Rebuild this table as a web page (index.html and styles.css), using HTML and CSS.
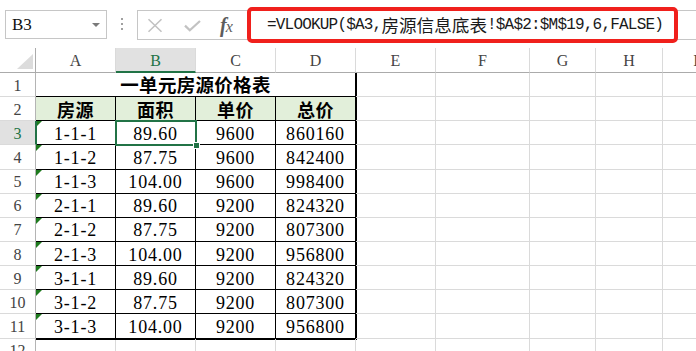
FILE: index.html
```html
<!DOCTYPE html>
<html lang="zh-CN">
<head>
<meta charset="utf-8">
<title>一单元房源价格表</title>
<link rel="stylesheet" href="styles.css">
</head>
<body>
<div class="app">
  <div class="fbar">
    <div class="namebox"><span class="nb-text">B3</span><span class="nb-arrow"></span></div>
    <div class="sep">
      <svg width="2" height="12" viewBox="0 0 2 12"><rect x="0" y="0" width="2" height="2" fill="#a0a0a0"/><rect x="0" y="5" width="2" height="2" fill="#a0a0a0"/><rect x="0" y="10" width="2" height="2" fill="#a0a0a0"/></svg>
    </div>
    <div class="finput">
      <div class="tools">
        <svg class="ic-x" width="16" height="15" viewBox="0 0 16 15"><path d="M1.5 1.2 L14.5 13.8 M14.5 1.2 L1.5 13.8" stroke="#c2c2c2" stroke-width="1.6" fill="none"/></svg>
        <svg class="ic-ok" width="17" height="12" viewBox="0 0 17 12"><path d="M1 5.6 L5.8 10.3 L16 1" stroke="#c2c2c2" stroke-width="2.2" fill="none"/></svg>
        <span class="fx">f<span class="fx-x">x</span></span>
      </div>
      <div class="formula"><span class="fm">=VLOOKUP($A3,</span><span class="fm-cjk">房源信息底表</span><span class="fm">!$A$2:$M$19,6,FALSE)</span></div>
    </div>
  </div>

  <div class="sheet">
    <div class="c corner"><span class="tri"></span></div>
    <div class="c ch">A</div><div class="c ch on">B</div><div class="c ch">C</div><div class="c ch">D</div><div class="c ch">E</div><div class="c ch">F</div><div class="c ch">G</div><div class="c ch">H</div><div class="c ch">I</div>

    <div class="c rh">1</div>
    <div class="c tb title last-col">一单元房源价格表</div>
    <div class="c"></div><div class="c"></div><div class="c"></div><div class="c"></div><div class="c"></div>

    <div class="c rh">2</div>
    <div class="c tb hd">房源</div><div class="c tb hd">面积</div><div class="c tb hd">单价</div><div class="c tb hd last-col">总价</div>
    <div class="c"></div><div class="c"></div><div class="c"></div><div class="c"></div><div class="c"></div>

    <div class="c rh on">3</div>
    <div class="c tb txt">1-1-1</div><div class="c tb sel">89.60</div><div class="c tb">9600</div><div class="c tb last-col">860160</div>
    <div class="c"></div><div class="c"></div><div class="c"></div><div class="c"></div><div class="c"></div>

    <div class="c rh">4</div>
    <div class="c tb txt">1-1-2</div><div class="c tb">87.75</div><div class="c tb">9600</div><div class="c tb last-col">842400</div>
    <div class="c"></div><div class="c"></div><div class="c"></div><div class="c"></div><div class="c"></div>

    <div class="c rh">5</div>
    <div class="c tb txt">1-1-3</div><div class="c tb">104.00</div><div class="c tb">9600</div><div class="c tb last-col">998400</div>
    <div class="c"></div><div class="c"></div><div class="c"></div><div class="c"></div><div class="c"></div>

    <div class="c rh">6</div>
    <div class="c tb txt">2-1-1</div><div class="c tb">89.60</div><div class="c tb">9200</div><div class="c tb last-col">824320</div>
    <div class="c"></div><div class="c"></div><div class="c"></div><div class="c"></div><div class="c"></div>

    <div class="c rh">7</div>
    <div class="c tb txt">2-1-2</div><div class="c tb">87.75</div><div class="c tb">9200</div><div class="c tb last-col">807300</div>
    <div class="c"></div><div class="c"></div><div class="c"></div><div class="c"></div><div class="c"></div>

    <div class="c rh">8</div>
    <div class="c tb txt">2-1-3</div><div class="c tb">104.00</div><div class="c tb">9200</div><div class="c tb last-col">956800</div>
    <div class="c"></div><div class="c"></div><div class="c"></div><div class="c"></div><div class="c"></div>

    <div class="c rh">9</div>
    <div class="c tb txt">3-1-1</div><div class="c tb">89.60</div><div class="c tb">9200</div><div class="c tb last-col">824320</div>
    <div class="c"></div><div class="c"></div><div class="c"></div><div class="c"></div><div class="c"></div>

    <div class="c rh">10</div>
    <div class="c tb txt">3-1-2</div><div class="c tb">87.75</div><div class="c tb">9200</div><div class="c tb last-col">807300</div>
    <div class="c"></div><div class="c"></div><div class="c"></div><div class="c"></div><div class="c"></div>

    <div class="c rh">11</div>
    <div class="c tb txt last-row">3-1-3</div><div class="c tb last-row">104.00</div><div class="c tb last-row">9200</div><div class="c tb last-col last-row">956800</div>
    <div class="c"></div><div class="c"></div><div class="c"></div><div class="c"></div><div class="c"></div>

    <div class="c rh">12</div>
    <div class="c"></div><div class="c"></div><div class="c"></div><div class="c"></div>
    <div class="c"></div><div class="c"></div><div class="c"></div><div class="c"></div><div class="c"></div>
  </div>
</div>
</body>
</html>
```

FILE: styles.css
```css
html, body {
  margin: 0;
  padding: 0;
  background: #fff;
}
body {
  width: 696px;
  height: 351px;
  overflow: hidden;
  font-family: "Liberation Serif", "Noto Sans CJK SC", serif;
  color: #000;
}
.app {
  width: 696px;
  height: 351px;
  overflow: hidden;
}

/* ---------- formula bar ---------- */
.fbar {
  display: flex;
  align-items: flex-start;
  height: 48px;
}
.namebox {
  box-sizing: border-box;
  flex: 0 0 102px;
  height: 29px;
  margin: 10px 0 0 5px;
  border: 1px solid #c6c6c6;
  display: flex;
  align-items: center;
  justify-content: space-between;
  padding: 0 6px 0 6px;
  font-size: 17px;
  color: #111;
}
.nb-arrow {
  width: 0;
  height: 0;
  border-left: 4px solid transparent;
  border-right: 4px solid transparent;
  border-top: 4px solid #7a7a7a;
}
.sep {
  flex: 0 0 30px;
  height: 48px;
  display: flex;
  align-items: center;
  justify-content: center;
}
.finput {
  flex: 1;
  box-sizing: border-box;
  height: 30px;
  margin-top: 10px;
  border: 1px solid #c6c6c6;
  border-right: 0;
  display: flex;
  align-items: center;
}
.tools {
  flex: 0 0 109px;
  display: flex;
  align-items: center;
  height: 100%;
}
.ic-x { margin-left: 9px; }
.ic-ok { margin-left: 21px; margin-top: 2px; }
.fx {
  margin-left: 19px;
  font-family: "Liberation Serif", serif;
  font-style: italic;
  font-weight: 700;
  font-size: 20px;
  color: #5c5c5c;
  line-height: 1;
}
.fx-x {
  font-size: 16px;
  font-weight: 400;
  margin-left: -1px;
}
.formula {
  box-sizing: border-box;
  flex: 0 0 431px;
  height: 36px;
  border: 4px solid #f0201c;
  border-radius: 5px;
  padding-left: 16px;
  display: flex;
  align-items: center;
  white-space: nowrap;
  color: #1a1a1a;
  position: relative;
  z-index: 1;
}
.fm {
  font-family: "Liberation Mono", monospace;
  font-size: 16px;
  letter-spacing: -0.8px;
}
.fm-cjk {
  font-family: "Noto Sans CJK SC", sans-serif;
  font-size: 17.6px;
  line-height: 1;
}

/* ---------- sheet ---------- */
.sheet {
  display: grid;
  grid-template-columns: 36px 80px 80px 80px 80px 80px 94px 66px 67px 67px;
  grid-template-rows: 25px;
  grid-auto-rows: 24.15px;
  width: 730px;
}
.c {
  box-sizing: border-box;
  border-right: 1px solid #dadada;
  border-bottom: 1px solid #dadada;
  display: flex;
  align-items: center;
  justify-content: center;
  font-size: 18px;
  line-height: 1;
  white-space: nowrap;
  min-width: 0;
}
.corner {
  justify-content: flex-end;
  align-items: flex-end;
  padding: 0 2px 3px 0;
  border-right-color: #ababab;
  border-bottom-color: #ababab;
}
.tri {
  width: 0;
  height: 0;
  border-left: 16px solid transparent;
  border-bottom: 15px solid #dcdcdc;
}
.ch {
  font-size: 16px;
  color: #444;
  border-bottom-color: #ababab;
  padding-top: 1px;
}
.ch.on {
  background: #e1e1e1;
  color: #217346;
  border-bottom: 2px solid #217346;
  padding-top: 2px;
}
.rh {
  font-size: 16px;
  color: #444;
  border-right-color: #b4b4b4;
  padding-top: 2px;
}
.rh.on {
  background: #e1e1e1;
  color: #217346;
  border-right-color: #217346;
  box-shadow: 1px 0 0 #217346;
  position: relative;
  z-index: 2;
}

/* table */
.tb {
  border-right-color: #000;
  border-bottom-color: #000;
  padding-top: 2px;
  letter-spacing: 0.8px;
}
.title {
  grid-column: span 4;
  font-family: "Noto Sans CJK SC", sans-serif;
  font-weight: 700;
  font-size: 18.5px;
  padding-top: 0;
  letter-spacing: 0.3px;
}
.hd {
  background: #e2efda;
  font-family: "Noto Sans CJK SC", sans-serif;
  font-weight: 700;
  font-size: 18px;
  padding-top: 0;
  letter-spacing: 0.5px;
}
.last-col {
  box-shadow: 1px 0 0 #000;
}
.last-row {
  box-shadow: 0 1px 0 #000;
}
.last-col.last-row {
  box-shadow: 1px 0 0 #000, 0 1px 0 #000, 1px 1px 0 #000;
}
.txt {
  position: relative;
}
.txt::before {
  content: "";
  position: absolute;
  left: 0;
  top: 0;
  border-top: 6px solid #1e7b1e;
  border-right: 6px solid transparent;
}
.sel {
  position: relative;
}
.sel::after {
  content: "";
  position: absolute;
  left: -1px;
  top: -1px;
  right: -2px;
  bottom: -2px;
  border: 2px solid #217346;
  z-index: 3;
}
.sel::before {
  content: "";
  position: absolute;
  right: -5px;
  bottom: -5px;
  width: 5px;
  height: 5px;
  background: #217346;
  border: 1px solid #fff;
  z-index: 4;
}
```
